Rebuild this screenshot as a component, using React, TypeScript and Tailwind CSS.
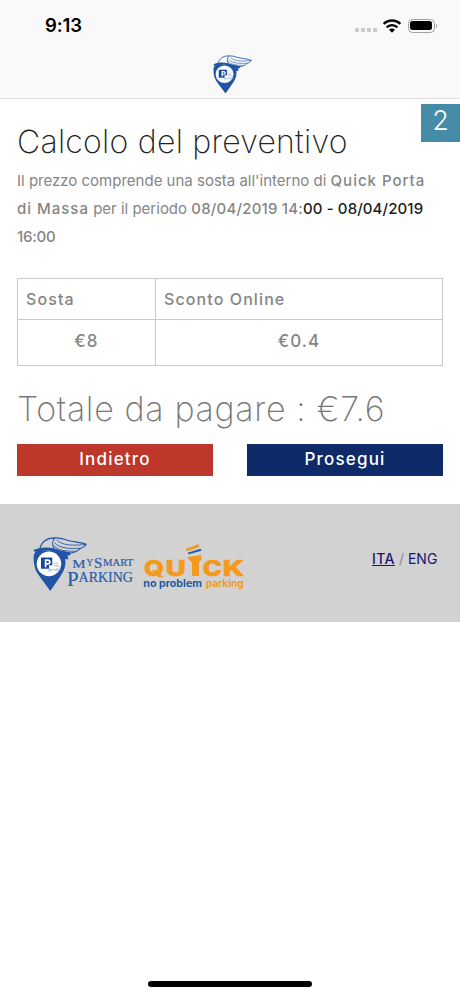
import React from 'react';

const rows = {
  head: ['Sosta', 'Sconto Online'],
  values: ['€8', '€0.4'],
};

const PinMark: React.FC<{ disc?: string }> = ({ disc = '#fff' }) => (
  <>
    <path d="M42 98 C42 84 48 76 58 74 L136 78 L153 84 L150 92 L144 90 L146 103 L137 101 C139 118 136 134 124 151 L92 198 L60 154 C47 138 42 122 42 98Z" fill="#2155a4" />
    <circle cx="88" cy="116" r="37" fill={disc} />
    <path
      d="M60 74 C64 50 82 37 106 38 C98 46 97 60 104 72 C118 77 138 83 153 84 C164 82 175 77 180 71 C188 68 196 64 200 57 C186 52 170 50 158 48 C138 46 128 36 106 38"
      fill="none"
      stroke="#2155a4"
      strokeWidth="3.5"
      strokeLinejoin="round"
    />
    <path d="M42 74 C58 66 82 64 104 70 C122 76 140 82 155 82 L150 88 C126 87 112 80 96 77 C78 74 60 76 44 80Z" fill="#2155a4" />
    <path d="M112 43 C126 60 152 62 198 58 M104 52 C120 70 150 71 181 69 M101 61 C114 75 138 79 166 78" fill="none" stroke="#2155a4" strokeWidth="2.5" />
    <path d="M64 97 H98 V120 H88 V131 H64Z" fill="#17499a" />
    <path d="M78 126 V105 H84 C93 105 93 116 84 116 H78" fill="none" stroke="#fff" strokeWidth="5" />
    <path d="M100 114 H116 M94 134 H108 M116 132 H124 M102 122 C108 119 116 121 123 127" fill="none" stroke="#7d9ccc" strokeWidth="2" />
    <circle cx="91" cy="135" r="3.5" fill="none" stroke="#7d9ccc" strokeWidth="2" />
    <circle cx="112" cy="134" r="3.5" fill="none" stroke="#7d9ccc" strokeWidth="2" />
  </>
);

const MySmartLogo = () => (
  <svg viewBox="40 30 304 170" className="mt-[31px] h-[57px] w-[101px]">
    <PinMark />
    <g fill="#2a5ca8" stroke="#2a5ca8" strokeWidth="0.6" fontFamily="Liberation Serif, serif">
      <text x="158" y="128" fontSize="40" textLength="40" lengthAdjust="spacingAndGlyphs">M</text>
      <text x="201" y="124" fontSize="29" textLength="20" lengthAdjust="spacingAndGlyphs">Y</text>
      <text x="224" y="128" fontSize="44" textLength="25" lengthAdjust="spacingAndGlyphs">S</text>
      <text x="251" y="124" fontSize="29" textLength="91" lengthAdjust="spacingAndGlyphs">MART</text>
      <text x="142" y="182" fontSize="64" textLength="35" lengthAdjust="spacingAndGlyphs">P</text>
      <text x="177" y="172" fontSize="44" textLength="164" lengthAdjust="spacingAndGlyphs">ARKING</text>
    </g>
  </svg>
);

const QuickLogo = () => (
  <svg viewBox="0 0 306 138" className="mt-[39px] ml-[10px] h-[46px] w-[102px] overflow-visible">
    <g fontFamily="Inter, sans-serif" fontWeight="800" fontSize="63" fill="#f39a1e" stroke="#f39a1e" strokeWidth="2">
      <text x="0" y="99" textLength="60" lengthAdjust="spacingAndGlyphs">Q</text>
      <text x="65" y="99" textLength="60" lengthAdjust="spacingAndGlyphs">U</text>
      <text x="176" y="99" textLength="58" lengthAdjust="spacingAndGlyphs">C</text>
      <text x="236" y="99" textLength="64" lengthAdjust="spacingAndGlyphs">K</text>
    </g>
    <path d="M131 42 L171 36 L173 46 C171 53 166 54 165 60 V99 H144 V61 C143 53 134 54 131 42Z" fill="#f39a1e" />
    <path d="M125 17 L163 4 L167 11 L129 25Z" fill="#f39a1e" />
    <path d="M131 29 L170 17 L172 23 L134 34Z" fill="#1f5aa3" />
    <g fontFamily="Inter, sans-serif" fontWeight="700" fontSize="29">
      <text x="-2" y="131" fill="#1f5aa3" textLength="176" lengthAdjust="spacingAndGlyphs">no problem</text>
      <text x="185" y="131" fill="#f39a1e" textLength="114" lengthAdjust="spacingAndGlyphs">parking</text>
    </g>
  </svg>
);

const StatusBar = () => (
  <div className="flex h-[51px] items-center justify-between pr-[23px] pl-[45px]">
    <span className="text-[18.5px] font-semibold tracking-[-0.1px] text-black">9:13</span>
    <div className="flex items-center">
      <div className="mt-[9px] flex gap-[1.8px]">
        {[0, 1, 2, 3].map((i) => (
          <span key={i} className="size-[4px] rounded-[1px] bg-[#c9c9c9]" />
        ))}
      </div>
      <svg viewBox="0 0 54 42" className="mr-[1px] ml-[6px] h-[14px] w-[18px]" fill="none" stroke="#000" strokeWidth="7">
        <path d="M2 15 C16 1 38 1 52 15" />
        <path d="M11 25 C20 16 34 16 43 25" />
        <path d="M27 41 L18 32 C23 27 31 27 36 32Z" fill="#000" stroke="none" />
      </svg>
      <div className="ml-[6px] h-[14px] w-[27px] rounded-[4.5px] border border-[#a0a0a0] p-[1.5px]">
        <div className="h-full w-full rounded-[2.5px] bg-black" />
      </div>
      <span className="ml-[1px] h-[4px] w-[1.5px] rounded-r bg-[#a0a0a0]" />
    </div>
  </div>
);

export default function App() {
  return (
    <div className="flex h-[996px] w-[460px] flex-col overflow-hidden bg-white font-['Inter',sans-serif] text-[#858585]">
      <header className="h-[99px] shrink-0 border-b border-[#dedede] bg-[#f9f9f9]">
        <StatusBar />
        <svg viewBox="40 30 162 170" className="mt-[3px] ml-[213px] h-[40px] w-[39px]" preserveAspectRatio="none">
          <PinMark disc="#f9f9f9" />
        </svg>
      </header>

      <main className="relative h-[405px] shrink-0 px-[17px] pt-[19px]">
        <div className="absolute top-[5px] right-0 flex h-[38px] w-[39px] items-center justify-center bg-[#468ba7] pb-[4px] text-[27px] font-light text-white">
          2
        </div>
        <h1 className="h-[49px] text-[32px] leading-[48px] font-extralight tracking-[0.25px] whitespace-nowrap text-[#222]">
          Calcolo del preventivo
        </h1>
        <p className="text-[15px] leading-[28px] whitespace-nowrap">
          <span>Il prezzo comprende una sosta all'interno di </span>
          <b className="font-medium tracking-[1px]">Quick Porta</b>
          <br />
          <b className="font-medium tracking-[1px]">di Massa</b>
          <span> per il periodo </span>
          <b className="font-medium tracking-[0.2px]">08/04/2019 14:</b>
          <b className="font-medium tracking-[0.1px] text-[#1c1c1c]">00 - 08/04/2019</b>
          <br />
          <b className="font-medium tracking-[-0.2px]">16:00</b>
        </p>

        <table className="mt-[27px] h-[87px] w-[426px] table-fixed border-collapse text-[16px] tracking-[1.1px]">
          <colgroup>
            <col className="w-[138px]" />
            <col />
          </colgroup>
          <thead>
            <tr className="h-[41px]">
              {rows.head.map((label) => (
                <th key={label} className="border border-[#c9c9c9] px-[8px] text-left font-medium">
                  {label}
                </th>
              ))}
            </tr>
          </thead>
          <tbody>
            <tr className="h-[46px]">
              {rows.values.map((value) => (
                <td key={value} className="border border-[#c9c9c9] pb-[1px] text-center text-[17px] font-medium">
                  {value}
                </td>
              ))}
            </tr>
          </tbody>
        </table>

        <h2 className="mt-[19px] h-[49px] text-[34px] leading-[48px] font-extralight tracking-[0.65px] whitespace-nowrap text-[#777]">
          Totale da pagare : €7.6
        </h2>
        <div className="mt-[10px] flex justify-between text-[17px] font-medium tracking-[1.2px] text-white">
          <button className="h-[32px] w-[196px] bg-[#be372b]">Indietro</button>
          <button className="h-[32px] w-[196px] bg-[#0e2a68]">Prosegui</button>
        </div>
      </main>

      <footer className="flex h-[118px] shrink-0 items-start bg-[#d2d2d2] pl-[33px]">
        <MySmartLogo />
        <QuickLogo />
        <div className="mt-[45px] ml-[126px] flex text-[14px] leading-[20px] text-[#1c1470]">
          <span className="font-medium tracking-[0.4px] underline">ITA</span>
          <span className="px-[4px] text-[#888]">/</span>
          <span>ENG</span>
        </div>
      </footer>

      <div className="mx-auto mt-auto mb-[9px] h-[6px] w-[164px] shrink-0 rounded-full bg-black" />
    </div>
  );
}
